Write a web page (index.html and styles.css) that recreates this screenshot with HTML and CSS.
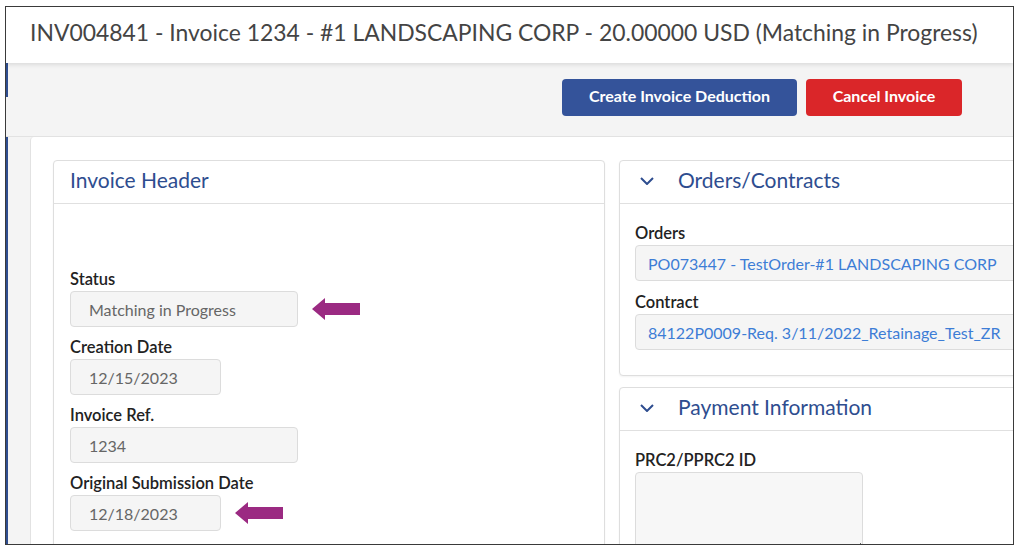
FILE: index.html
```html
<!DOCTYPE html>
<html lang="en">
<head>
    <meta charset="UTF-8">
    <meta name="viewport" content="width=device-width, initial-scale=1.0">
    <title>Invoice INV004841</title>
    <link rel="stylesheet" href="styles.css">
</head>
<body>
    <div class="frame">
        <div class="title-bar">
            <h1>INV004841 - Invoice 1234 - #1 LANDSCAPING CORP - 20.00000 USD (Matching in Progress)</h1>
        </div>
        <div class="toolbar">
            <button class="btn btn-primary">Create Invoice Deduction</button>
            <button class="btn btn-danger">Cancel Invoice</button>
        </div>
        <div class="content">
            <div class="sheet">
                <div class="column">
                    <div class="panel">
                        <div class="panel-header">
                            <h2>Invoice Header</h2>
                        </div>
                        <div class="panel-body header-body">
                            <div class="field">
                                <label>Status</label>
                                <div class="field-row">
                                    <div class="input wide">Matching in Progress</div>
                                    <svg class="arrow" width="48" height="22" viewBox="0 0 48 22"><polygon points="0,11 13,0 13,5 48,5 48,17 13,17 13,22" fill="#9b2a82"/></svg>
                                </div>
                            </div>
                            <div class="field">
                                <label>Creation Date</label>
                                <div class="input narrow">12/15/2023</div>
                            </div>
                            <div class="field">
                                <label>Invoice Ref.</label>
                                <div class="input wide">1234</div>
                            </div>
                            <div class="field">
                                <label>Original Submission Date</label>
                                <div class="field-row">
                                    <div class="input narrow">12/18/2023</div>
                                    <svg class="arrow" width="48" height="22" viewBox="0 0 48 22"><polygon points="0,11 13,0 13,5 48,5 48,17 13,17 13,22" fill="#9b2a82"/></svg>
                                </div>
                            </div>
                        </div>
                    </div>
                </div>
                <div class="column side">
                    <div class="panel">
                        <div class="panel-header">
                            <svg class="chevron" width="14" height="8" viewBox="0 0 14 8"><polyline points="1,1 7,7 13,1" fill="none" stroke="#2e4d8f" stroke-width="2"/></svg>
                            <h2>Orders/Contracts</h2>
                        </div>
                        <div class="panel-body">
                            <div class="field">
                                <label>Orders</label>
                                <div class="input link">PO073447 - TestOrder-#1 LANDSCAPING CORP</div>
                            </div>
                            <div class="field">
                                <label>Contract</label>
                                <div class="input link">84122P0009-Req. 3/11/2022_Retainage_Test_ZR</div>
                            </div>
                        </div>
                    </div>
                    <div class="panel">
                        <div class="panel-header">
                            <svg class="chevron" width="14" height="8" viewBox="0 0 14 8"><polyline points="1,1 7,7 13,1" fill="none" stroke="#2e4d8f" stroke-width="2"/></svg>
                            <h2>Payment Information</h2>
                        </div>
                        <div class="panel-body">
                            <div class="field">
                                <label>PRC2/PPRC2 ID</label>
                                <textarea class="textbox"></textarea>
                            </div>
                        </div>
                    </div>
                </div>
            </div>
        </div>
    </div>
</body>
</html>
```

FILE: styles.css
```css
body {
    margin: 0;
    background-color: #ffffff;
    font-family: Lato, "Open Sans", sans-serif;
    color: #222;
}
.frame {
    margin: 6px 0 0 5px;
    width: 1009px;
    height: 539px;
    border: 1px solid #3a3a3a;
    box-sizing: border-box;
    overflow: hidden;
    display: flex;
    flex-direction: column;
    background-color: #f4f4f4;
}
.title-bar {
    height: 56px;
    flex-shrink: 0;
    display: flex;
    align-items: center;
    padding: 0 0 7px 24px;
    box-sizing: border-box;
    background-color: #ffffff;
    box-shadow: 0 2px 4px rgba(0, 0, 0, 0.1);
    position: relative;
    z-index: 1;
}
.title-bar h1 {
    margin: 0;
    font-size: 22.9px;
    font-weight: normal;
    color: #444;
    white-space: nowrap;
}
.toolbar {
    height: 74px;
    flex-shrink: 0;
    display: flex;
    justify-content: flex-end;
    align-items: flex-start;
    gap: 9px;
    padding: 16px 51px 0 0;
    box-sizing: border-box;
    border-bottom: 1px solid #e2e2e2;
    background-color: #f4f4f4;
    background-image: linear-gradient(#2e4d8f, #2e4d8f);
    background-size: 2px 34px;
    background-repeat: no-repeat;
}
.btn {
    height: 37px;
    padding: 0 0 4px;
    border: none;
    border-radius: 4px;
    color: #fff;
    font-family: Lato, sans-serif;
    font-size: 16px;
    font-weight: bold;
    cursor: pointer;
}
.btn-primary {
    width: 235px;
    background-color: #34539a;
}
.btn-danger {
    width: 156px;
    background-color: #da2629;
}
.content {
    flex: 1;
    border-left: 2px solid #2e4d8f;
    padding-left: 22px;
    background-color: #f4f4f4;
}
.sheet {
    height: 100%;
    display: flex;
    gap: 14px;
    padding: 23px 0 0 22px;
    background-color: #fff;
    border-left: 1px solid #e2e2e2;
    border-top-left-radius: 4px;
}
.column {
    width: 552px;
    flex-shrink: 0;
    display: flex;
    flex-direction: column;
    gap: 11px;
}
.panel {
    border: 1px solid #dedede;
    border-radius: 4px;
    background-color: #fff;
    box-shadow: 0 1px 2px rgba(0, 0, 0, 0.05);
}
.panel-header {
    height: 43px;
    display: flex;
    align-items: center;
    padding: 0 0 5px 16px;
    box-sizing: border-box;
    border-bottom: 1px solid #e0e0e0;
}
.panel-header h2 {
    margin: 0;
    font-size: 21px;
    font-weight: normal;
    color: #2e4d8f;
}
.chevron {
    margin: 3px 24px 0 4px;
}
.panel-body {
    padding: 16px 16px 18px;
}
.header-body {
    padding-top: 63px;
}
.side .panel-body {
    padding: 17px 15px 16px;
}
.side .field {
    margin-bottom: 9px;
}
.field {
    margin-bottom: 8px;
}
.field label {
    display: block;
    padding-top: 2px;
    font-size: 16.5px;
    line-height: 21px;
    font-weight: 600;
    color: #222;
    margin-bottom: 1px;
}
.field-row {
    display: flex;
    align-items: center;
    gap: 14px;
}
.input {
    height: 36px;
    box-sizing: border-box;
    display: flex;
    align-items: center;
    padding-left: 18px;
    background-color: #f5f5f5;
    border: 1px solid #dcdcdc;
    border-radius: 4px;
    font-size: 16px;
    color: #666;
    white-space: nowrap;
}
.wide {
    width: 228px;
}
.narrow {
    width: 151px;
}
.link {
    width: 100%;
    padding-left: 12px;
    color: #3d7dd6;
}
.textbox {
    display: block;
    width: 228px;
    height: 80px;
    box-sizing: border-box;
    background-color: #f7f7f7;
    border: 1px solid #dcdcdc;
    border-radius: 4px;
}
```
